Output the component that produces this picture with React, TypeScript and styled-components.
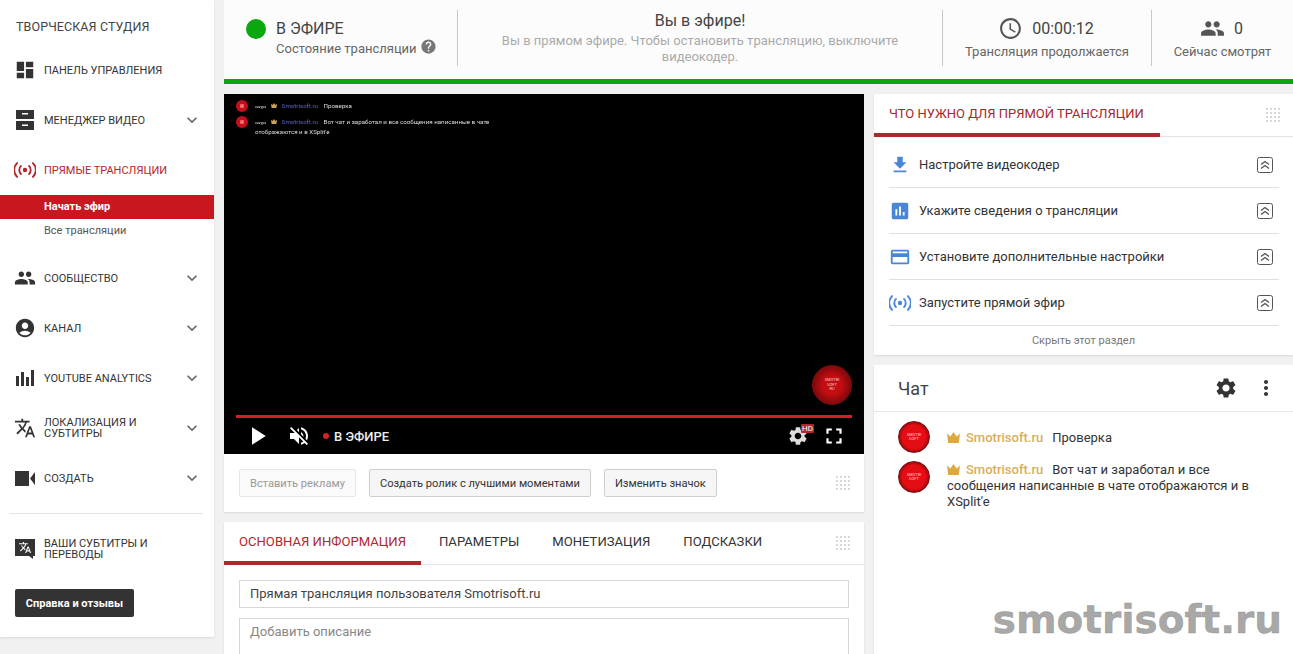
import React from 'react';
import styled, { createGlobalStyle } from 'styled-components';
import {
  MdAccessTime,
  MdAccountCircle,
  MdAssessment,
  MdCreditCard,
  MdDashboard,
  MdFileDownload,
  MdFullscreen,
  MdHelp,
  MdKeyboardArrowDown,
  MdMoreVert,
  MdPeople,
  MdPlayArrow,
  MdSettings,
  MdTranslate,
  MdVolumeOff,
} from 'react-icons/md';

const GlobalStyle = createGlobalStyle`
  html, body {
    margin: 0;
    height: 654px;
    overflow: hidden;
    background: #f1f1f1;
    font-family: Roboto, "Liberation Sans", sans-serif;
    color: #333;
  }
  * { box-sizing: border-box; }
`;

const Page = styled.div`
  position: relative;
  display: flex;
  align-items: flex-start;
  gap: 10px;
  width: 1293px;
  height: 654px;
  overflow: hidden;
`;

/* sidebar */

const Sidebar = styled.nav`
  flex: 0 0 214px;
  height: 637px;
  background: #fff;
  box-shadow: 0 1px 2px rgba(0, 0, 0, 0.1);
`;

const StudioTitle = styled.div`
  height: 45px;
  padding: 19px 0 0 16px;
  font-size: 12.5px;
  line-height: 15px;
  letter-spacing: 0.1px;
  color: #444;
`;

const NavItem = styled.div<{ $active?: boolean }>`
  display: flex;
  align-items: center;
  height: 50px;
  padding: 0 12px 0 14px;
  color: ${(p) => (p.$active ? '#b3262c' : '#333')};
`;

const NavIcon = styled.span`
  display: flex;
  align-items: center;
  justify-content: center;
  flex: 0 0 22px;
  width: 22px;
  margin-right: 8px;
  font-size: 22px;
`;

const NavLabel = styled.span`
  flex: 1;
  font-size: 11px;
  line-height: 11px;
  padding-right: 10px;
`;

const Chevron = styled(MdKeyboardArrowDown)`
  flex: 0 0 auto;
  font-size: 20px;
  color: #666;
`;

const SubItem = styled.div<{ $active?: boolean }>`
  height: 24px;
  padding-left: 44px;
  font-size: 11px;
  line-height: 23px;
  font-weight: ${(p) => (p.$active ? 700 : 400)};
  color: ${(p) => (p.$active ? '#fff' : '#555')};
  background: ${(p) => (p.$active ? '#c8171f' : 'transparent')};
`;

const SubList = styled.div`
  margin-bottom: 10px;
`;

const NavDivider = styled.div`
  height: 1px;
  margin: 10px 11px 10px 9px;
  background: #e4e4e4;
`;

const HelpButton = styled.button`
  display: block;
  width: 119px;
  height: 28px;
  margin: 15px 0 0 15px;
  border: 0;
  border-radius: 2px;
  background: #333;
  color: #fff;
  font-family: inherit;
  font-size: 11px;
  font-weight: 700;
`;

/* main */

const Main = styled.main`
  flex: 1;
  min-width: 0;
`;

const StatusBar = styled.header`
  display: flex;
  align-items: stretch;
  height: 79px;
  padding: 10px 0 13px;
  background: #fcfcfc;
`;

const StatusSection = styled.section<{ $width: number; $divided?: boolean }>`
  flex: 0 0 ${(p) => p.$width}px;
  border-right: ${(p) => (p.$divided ? '1px solid #c9c9c9' : '0')};
`;

const LiveState = styled(StatusSection)`
  display: flex;
  align-items: flex-start;
  padding: 9px 0 0 22px;
`;

const GreenDot = styled.span`
  flex: 0 0 20px;
  height: 20px;
  margin-right: 10px;
  border-radius: 50%;
  background: #0aa80e;
`;

const StateTitle = styled.div`
  font-size: 16px;
  line-height: 20px;
  color: #444;
`;

const StateHint = styled.div`
  display: flex;
  align-items: center;
  gap: 3px;
  margin-top: 2px;
  font-size: 13px;
  line-height: 16px;
  color: #666;
  svg {
    font-size: 17px;
    color: #777;
    margin-top: -5px;
  }
`;

const Notice = styled(StatusSection)`
  padding: 1px 40px 0;
  text-align: center;
`;

const NoticeTitle = styled.div`
  font-size: 16px;
  line-height: 20px;
  color: #444;
`;

const NoticeText = styled.div`
  margin-top: 2px;
  font-size: 13px;
  line-height: 16px;
  color: #aaa;
`;

const Counter = styled(StatusSection)`
  padding-top: 7px;
  text-align: center;
`;

const CounterValue = styled.div`
  display: flex;
  align-items: center;
  justify-content: center;
  gap: 9px;
  height: 22px;
  padding-right: 2px;
  font-size: 16px;
  color: #444;
  svg {
    font-size: 25px;
    color: #555;
  }
`;

const CounterLabel = styled.div`
  margin-top: 5px;
  font-size: 13px;
  line-height: 16px;
  color: #666;
`;

const GreenBar = styled.div`
  height: 5px;
  background: #0aa80e;
`;

const Columns = styled.div`
  display: flex;
  align-items: flex-start;
  gap: 10px;
  padding-top: 10px;
`;

const LeftColumn = styled.div`
  flex: 0 0 640px;
`;

const RightColumn = styled.div`
  flex: 0 0 419px;
`;

const Card = styled.div`
  background: #fff;
  box-shadow: 0 1px 2px rgba(0, 0, 0, 0.1);
`;

/* player */

const Player = styled.div`
  display: flex;
  flex-direction: column;
  height: 360px;
  background: #000;
`;

const Overlay = styled.div`
  flex: 1;
  padding: 6px 12px 0;
`;

const OverlayRow = styled.div`
  display: flex;
  align-items: flex-start;
  min-height: 16px;
`;

const OverlayAvatar = styled.span`
  flex: 0 0 12px;
  height: 12px;
  margin-right: 7px;
  border-radius: 50%;
  background: radial-gradient(circle, #f0686c 0 22%, #c4101a 30% 100%);
`;

const OverlayText = styled.div`
  width: 245px;
  padding-top: 2px;
  font-size: 6.2px;
  line-height: 9px;
  color: #ddd;
  filter: blur(0.2px);
`;

const OverlayName = styled.span`
  color: #5a63c9;
  margin: 0 4px 0 3px;
`;

const OverlayCrown = styled.svg`
  width: 6px;
  height: 5px;
  margin-left: 5px;
  fill: #c9a552;
`;

const OverlayTiny = styled.span`
  font-size: 3.5px;
`;

const LogoRow = styled.div`
  display: flex;
  justify-content: flex-end;
  padding: 0 12px 10px 0;
`;

const LogoBadge = styled.div<{ $size: number; $dim?: boolean }>`
  display: flex;
  align-items: center;
  justify-content: center;
  flex: 0 0 ${(p) => p.$size}px;
  width: ${(p) => p.$size}px;
  height: ${(p) => p.$size}px;
  border-radius: 50%;
  border: 1px solid #7d0c10;
  background: ${(p) =>
    p.$dim
      ? 'radial-gradient(circle, #c30d12 0 35%, #8f0a0d 62%, #6d0709 88%, #9c0e12 100%)'
      : 'radial-gradient(circle, #e40d13 0 55%, #9a0b0f 72%, #cc1219 88%)'};
  color: #f3d0d0;
  font-size: 4px;
  line-height: 4.5px;
  text-align: center;
`;

const ProgressTrack = styled.div`
  height: 3px;
  margin: 0 12px;
  background: #cf2027;
`;

const Controls = styled.div`
  display: flex;
  align-items: center;
  height: 36px;
  padding: 0 17px 0 18px;
  color: #fff;
`;

const LiveDot = styled.span`
  width: 6px;
  height: 6px;
  margin: 0 5px 0 12px;
  border-radius: 50%;
  background: #d3222a;
`;

const LiveLabel = styled.span`
  flex: 1;
  font-size: 13px;
  font-weight: 500;
  color: #eee;
`;

const ControlIcon = styled.span<{ $size: number; $gap?: number }>`
  display: flex;
  margin-left: ${(p) => p.$gap ?? 0}px;
  font-size: ${(p) => p.$size}px;
`;

const SettingsIcon = styled.span`
  position: relative;
  display: flex;
  font-size: 22px;
  margin-right: 12px;
  color: #ddd;
`;

const HdBadge = styled.span`
  position: absolute;
  top: -1px;
  right: -5px;
  padding: 0 1px;
  border-radius: 1px;
  background: #b3262c;
  color: #fff;
  font-size: 8px;
  line-height: 9px;
`;

/* actions under the player */

const ActionBar = styled(Card)`
  display: flex;
  align-items: center;
  gap: 13px;
  height: 58px;
  padding: 0 14px 0 15px;
`;

const ActionButton = styled.button<{ $disabled?: boolean }>`
  height: 28px;
  padding: 0 10px;
  border: 1px solid ${(p) => (p.$disabled ? '#e6e6e6' : '#cfcfcf')};
  border-radius: 2px;
  background: ${(p) => (p.$disabled ? '#fafafa' : '#f6f6f6')};
  color: ${(p) => (p.$disabled ? '#999' : '#333')};
  font-family: inherit;
  font-size: 11.1px;
  white-space: nowrap;
`;

const Spacer = styled.div`
  flex: 1;
`;

const TabsCard = styled(Card)`
  margin-top: 10px;
  height: 200px;
`;

const TabRow = styled.div`
  display: flex;
  align-items: stretch;
  gap: 3px;
  height: 43px;
  padding-right: 14px;
  border-bottom: 1px solid #e4e4e4;
`;

const Tab = styled.div<{ $active?: boolean }>`
  height: ${(p) => (p.$active ? 43 : 42)}px;
  padding: 11px 15px 0;
  border-bottom: ${(p) => (p.$active ? '4px solid #b0272c' : '0')};
  font-size: 13.1px;
  line-height: 17px;
  color: ${(p) => (p.$active ? '#b0272c' : '#333')};
  white-space: nowrap;
`;

const DragGrip = styled.svg`
  flex: 0 0 14px;
  width: 14px;
  height: 14px;
  fill: #d8d8d8;
`;

const TabGrip = styled(DragGrip)`
  align-self: center;
`;

const TabBody = styled.div`
  padding: 15px 15px 0;
`;

const TitleField = styled.div`
  height: 28px;
  padding: 0 10px;
  border: 1px solid #d6d6d6;
  font-size: 13px;
  line-height: 26px;
  color: #444;
`;

const DescriptionField = styled(TitleField)`
  height: 80px;
  margin-top: 10px;
  color: #888;
`;

/* checklist */

const ChecklistHeader = styled.div`
  display: flex;
  align-items: center;
  justify-content: space-between;
  height: 43px;
  padding-right: 13px;
  border-bottom: 1px solid #e4e4e4;
`;

const ChecklistTab = styled.div`
  width: 286px;
  height: 43px;
  padding: 11px 0 0 15px;
  border-bottom: 4px solid #b0272c;
  font-size: 13px;
  line-height: 17px;
  color: #a8262b;
  white-space: nowrap;
`;

const Checklist = styled.div`
  padding: 5px 14px 0 15px;
`;

const CheckRow = styled.div`
  display: flex;
  align-items: center;
  height: 46px;
  border-bottom: 1px solid #e0e0e0;
`;

const CheckIcon = styled.span`
  display: flex;
  justify-content: center;
  flex: 0 0 22px;
  width: 22px;
  margin-right: 8px;
  font-size: 22px;
  color: #4a86d8;
`;

const CheckLabel = styled.span`
  flex: 1;
  font-size: 13px;
  color: #333;
`;

const ExpandBox = styled.svg`
  flex: 0 0 16px;
  width: 16px;
  height: 16px;
  margin-right: 6px;
  fill: none;
  stroke: #555;
`;

const HideLink = styled.div`
  height: 29px;
  font-size: 11px;
  line-height: 29px;
  text-align: center;
  color: #777;
`;

/* chat */

const ChatCard = styled(Card)`
  margin-top: 10px;
  height: 300px;
`;

const ChatHeader = styled.div`
  display: flex;
  align-items: center;
  height: 47px;
  padding: 0 15px 0 24px;
  border-bottom: 1px solid #e8e8e8;
`;

const ChatTitle = styled.div`
  flex: 1;
  font-size: 18px;
  color: #444;
`;

const ChatAction = styled.span<{ $gap?: number }>`
  display: flex;
  margin-left: ${(p) => p.$gap ?? 0}px;
  font-size: 24px;
  color: #333;
`;

const ChatList = styled.div`
  padding: 9px 30px 0 24px;
`;

const ChatMessage = styled.div`
  display: flex;
  align-items: flex-start;
  margin-bottom: 8px;
`;

const MessageBody = styled.div<{ $top: number }>`
  flex: 1;
  padding: ${(p) => p.$top}px 0 0 17px;
  font-size: 13px;
  line-height: 16px;
  color: #333;
`;

const CrownIcon = styled.svg`
  width: 13px;
  height: 11px;
  margin-right: 6px;
  vertical-align: -1px;
  fill: #dca83f;
`;

const AuthorName = styled.span`
  margin-right: 9px;
  font-weight: 500;
  color: #d9ad5b;
`;

const Watermark = styled.div`
  position: absolute;
  right: 11px;
  top: 596px;
  font-family: "DejaVu Sans", sans-serif;
  font-size: 39px;
  font-weight: 700;
  line-height: 48px;
  color: rgba(135, 135, 135, 0.72);
  -webkit-text-stroke: 0.5px rgba(135, 135, 135, 0.72);
  pointer-events: none;
`;

const LiveIcon = () => (
  <svg width="22" height="22" viewBox="0 0 24 24" fill="none" stroke="currentColor" strokeWidth="2" strokeLinecap="round">
    <circle cx="12" cy="12" r="2.4" fill="currentColor" stroke="none" />
    <path d="M7.6 7.6a6.2 6.2 0 0 0 0 8.8M16.4 7.6a6.2 6.2 0 0 1 0 8.8" />
    <path d="M3.400 4.400a10.600 10.600 0 0 0 0 15.200M20.600 4.400a10.600 10.600 0 0 1 0 15.200" />
  </svg>
);

const VideoManagerIcon = () => (
  <svg width="18" height="20" viewBox="0 0 18 20" fill="currentColor">
    <path d="M0 0h18v9H0zM0 11h18v9H0z" />
    <path d="M6 3h6v1.6H6zM6 14.5h6v1.6H6z" fill="#fff" />
  </svg>
);

const AnalyticsIcon = () => (
  <svg width="18" height="16" viewBox="0 0 18 16" fill="currentColor">
    <path d="M0 6h3v10H0zM5 2h3v14H5zM10 7h3v9h-3zM15 0h3v16h-3z" />
  </svg>
);

const CreateIcon = () => (
  <svg width="20" height="15" viewBox="0 0 20 15" fill="currentColor">
    <path d="M0 0h14v15H0zM15 7.500 20 1v13z" />
  </svg>
);

const SubtitlesIcon = () => (
  <svg width="20" height="20" viewBox="0 0 20 20">
    <path d="M0 0h20v17h-2v3l-4-3H0z" fill="currentColor" />
    <g transform="translate(3.5 2) scale(0.55)" fill="#fff">
      <path d="M12.87 15.07l-2.54-2.51.03-.03A17.52 17.52 0 0 0 14.07 6H17V4h-7V2H8v2H1v2h11.17C11.5 7.92 10.44 9.75 9 11.35 8.07 10.32 7.3 9.19 6.69 8h-2c.73 1.63 1.73 3.17 2.98 4.56l-5.09 5.02L4 19l5-5 3.11 3.11.76-2.04zM18.5 10h-2L12 22h2l1.12-3h4.75L21 22h2l-4.5-12zm-2.62 7l1.62-4.33L19.12 17h-3.24z" />
    </g>
  </svg>
);

const Grip = () => (
  <>
    {[0, 4, 8, 12].flatMap((y) =>
      [0, 4, 8, 12].map((x) => <rect key={`${x}-${y}`} x={x} y={y} width="2" height="2" />),
    )}
  </>
);

const ExpandIcon = () => (
  <ExpandBox viewBox="0 0 16 16">
    <rect x="0.5" y="0.5" width="15" height="15" rx="2" />
    <path d="M4 7.500 8 4.500l4 3M4 11.500l4-3 4 3" strokeWidth="1.4" />
  </ExpandBox>
);

const crownPath = 'M0 1.500 3.400 4.500 6.500 0l3.100 4.500L13 1.500 11.800 11H1.200z';

const Crown = () => (
  <CrownIcon viewBox="0 0 13 11">
    <path d={crownPath} />
  </CrownIcon>
);

const checklistItems = [
  { icon: <MdFileDownload />, label: 'Настройте видеокодер' },
  { icon: <MdAssessment />, label: 'Укажите сведения о трансляции' },
  { icon: <MdCreditCard />, label: 'Установите дополнительные настройки' },
  { icon: <LiveIcon />, label: 'Запустите прямой эфир' },
];

const overlayMessages = ['Проверка', "Вот чат и заработал и все сообщения написанные в чате отображаются и в XSplit'e"];

const App: React.FC = () => {
  return (
    <Page>
      <GlobalStyle />
      <Sidebar>
        <StudioTitle>ТВОРЧЕСКАЯ СТУДИЯ</StudioTitle>
        <NavItem>
          <NavIcon><MdDashboard /></NavIcon>
          <NavLabel>ПАНЕЛЬ УПРАВЛЕНИЯ</NavLabel>
        </NavItem>
        <NavItem>
          <NavIcon><VideoManagerIcon /></NavIcon>
          <NavLabel>МЕНЕДЖЕР ВИДЕО</NavLabel>
          <Chevron />
        </NavItem>
        <NavItem $active>
          <NavIcon><LiveIcon /></NavIcon>
          <NavLabel>ПРЯМЫЕ ТРАНСЛЯЦИИ</NavLabel>
        </NavItem>
        <SubList>
          <SubItem $active>Начать эфир</SubItem>
          <SubItem>Все трансляции</SubItem>
        </SubList>
        <NavItem>
          <NavIcon><MdPeople /></NavIcon>
          <NavLabel>СООБЩЕСТВО</NavLabel>
          <Chevron />
        </NavItem>
        <NavItem>
          <NavIcon><MdAccountCircle /></NavIcon>
          <NavLabel>КАНАЛ</NavLabel>
          <Chevron />
        </NavItem>
        <NavItem>
          <NavIcon><AnalyticsIcon /></NavIcon>
          <NavLabel>YOUTUBE ANALYTICS</NavLabel>
          <Chevron />
        </NavItem>
        <NavItem>
          <NavIcon><MdTranslate /></NavIcon>
          <NavLabel>ЛОКАЛИЗАЦИЯ И СУБТИТРЫ</NavLabel>
          <Chevron />
        </NavItem>
        <NavItem>
          <NavIcon><CreateIcon /></NavIcon>
          <NavLabel>СОЗДАТЬ</NavLabel>
          <Chevron />
        </NavItem>
        <NavDivider />
        <NavItem>
          <NavIcon><SubtitlesIcon /></NavIcon>
          <NavLabel>ВАШИ СУБТИТРЫ И ПЕРЕВОДЫ</NavLabel>
        </NavItem>
        <HelpButton>Справка и отзывы</HelpButton>
      </Sidebar>

      <Main>
        <StatusBar>
          <LiveState $width={234} $divided>
            <GreenDot />
            <div>
              <StateTitle>В ЭФИРЕ</StateTitle>
              <StateHint>Состояние трансляции <MdHelp /></StateHint>
            </div>
          </LiveState>
          <Notice $width={485} $divided>
            <NoticeTitle>Вы в эфире!</NoticeTitle>
            <NoticeText>Вы в прямом эфире. Чтобы остановить трансляцию, выключите видеокодер.</NoticeText>
          </Notice>
          <Counter $width={209} $divided>
            <CounterValue><MdAccessTime />00:00:12</CounterValue>
            <CounterLabel>Трансляция продолжается</CounterLabel>
          </Counter>
          <Counter $width={141}>
            <CounterValue><MdPeople />0</CounterValue>
            <CounterLabel>Сейчас смотрят</CounterLabel>
          </Counter>
        </StatusBar>
        <GreenBar />

        <Columns>
          <LeftColumn>
            <Player>
              <Overlay>
                {overlayMessages.map((text) => (
                  <OverlayRow key={text}>
                    <OverlayAvatar />
                    <OverlayText>
                      <OverlayTiny>сакура</OverlayTiny>
                      <OverlayCrown viewBox="0 0 13 11"><path d={crownPath} /></OverlayCrown>{' '}
                      <OverlayName>Smotrisoft.ru</OverlayName> {text}
                    </OverlayText>
                  </OverlayRow>
                ))}
              </Overlay>
              <LogoRow>
                <LogoBadge $size={40} $dim>SMOTRI<br />SOFT<br />RU</LogoBadge>
              </LogoRow>
              <ProgressTrack />
              <Controls>
                <ControlIcon $size={30}><MdPlayArrow /></ControlIcon>
                <ControlIcon $size={24} $gap={15}><MdVolumeOff /></ControlIcon>
                <LiveDot />
                <LiveLabel>В ЭФИРЕ</LiveLabel>
                <SettingsIcon>
                  <MdSettings />
                  <HdBadge>HD</HdBadge>
                </SettingsIcon>
                <ControlIcon $size={26}><MdFullscreen /></ControlIcon>
              </Controls>
            </Player>

            <ActionBar>
              <ActionButton $disabled>Вставить рекламу</ActionButton>
              <ActionButton>Создать ролик с лучшими моментами</ActionButton>
              <ActionButton>Изменить значок</ActionButton>
              <Spacer />
              <DragGrip viewBox="0 0 14 14"><Grip /></DragGrip>
            </ActionBar>

            <TabsCard>
              <TabRow>
                <Tab $active>ОСНОВНАЯ ИНФОРМАЦИЯ</Tab>
                <Tab>ПАРАМЕТРЫ</Tab>
                <Tab>МОНЕТИЗАЦИЯ</Tab>
                <Tab>ПОДСКАЗКИ</Tab>
                <Spacer />
                <TabGrip viewBox="0 0 14 14"><Grip /></TabGrip>
              </TabRow>
              <TabBody>
                <TitleField>Прямая трансляция пользователя Smotrisoft.ru</TitleField>
                <DescriptionField>Добавить описание</DescriptionField>
              </TabBody>
            </TabsCard>
          </LeftColumn>

          <RightColumn>
            <Card>
              <ChecklistHeader>
                <ChecklistTab>ЧТО НУЖНО ДЛЯ ПРЯМОЙ ТРАНСЛЯЦИИ</ChecklistTab>
                <DragGrip viewBox="0 0 14 14"><Grip /></DragGrip>
              </ChecklistHeader>
              <Checklist>
                {checklistItems.map((item) => (
                  <CheckRow key={item.label}>
                    <CheckIcon>{item.icon}</CheckIcon>
                    <CheckLabel>{item.label}</CheckLabel>
                    <ExpandIcon />
                  </CheckRow>
                ))}
              </Checklist>
              <HideLink>Скрыть этот раздел</HideLink>
            </Card>

            <ChatCard>
              <ChatHeader>
                <ChatTitle>Чат</ChatTitle>
                <ChatAction><MdSettings /></ChatAction>
                <ChatAction $gap={16}><MdMoreVert /></ChatAction>
              </ChatHeader>
              <ChatList>
                <ChatMessage>
                  <LogoBadge $size={32}>SMOTRI<br />SOFT</LogoBadge>
                  <MessageBody $top={9}>
                    <Crown /><AuthorName>Smotrisoft.ru</AuthorName>Проверка
                  </MessageBody>
                </ChatMessage>
                <ChatMessage>
                  <LogoBadge $size={32}>SMOTRI<br />SOFT</LogoBadge>
                  <MessageBody $top={1}>
                    <Crown /><AuthorName>Smotrisoft.ru</AuthorName>Вот чат и заработал и все сообщения написанные в чате отображаются и в XSplit'e
                  </MessageBody>
                </ChatMessage>
              </ChatList>
            </ChatCard>
          </RightColumn>
        </Columns>
      </Main>

      <Watermark>smotrisoft.ru</Watermark>
    </Page>
  );
};

export default App;
